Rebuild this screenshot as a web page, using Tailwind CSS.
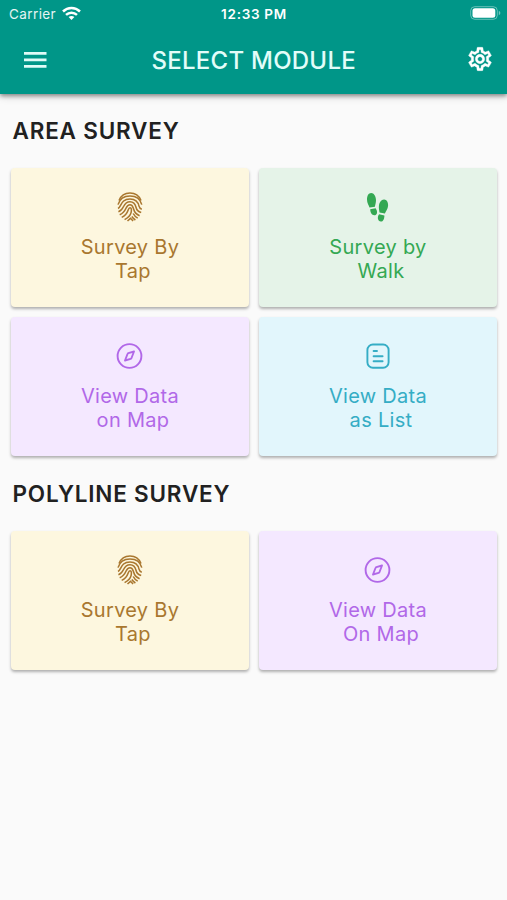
<!DOCTYPE html>
<html lang="en">
<head>
<meta charset="utf-8">
<title>Select Module</title>
<script src="https://cdn.jsdelivr.net/npm/@tailwindcss/browser@4"></script>
</head>
<body class="bg-[#fafafa] w-[507px] h-[900px] overflow-hidden font-['Inter','Liberation_Sans',sans-serif]">
<svg class="hidden">
  <symbol id="finger" viewBox="0 0 26 30">
    <g fill="none" stroke="currentColor" stroke-width="1.55" stroke-linecap="butt">
      <path d="M2 8.500C4 3.500 8 1 13 1s9 2.500 11 7.500"/>
      <path d="M1 12.600C2.500 7.300 7 3.900 13 3.900s10.500 3.400 11.800 8.700"/>
      <path d="M1 16.500C4.500 15 3.600 6.900 13 6.900c6.500 0 8.400 4.300 9 7.300 .4 1.800 1.300 2.600 2.800 3"/>
      <path d="M1.400 19.800C8 17.600 5.400 9.800 13 9.800c4.200 0 5.400 3 6 5.500 .6 2.700 2.400 4.500 5.200 5.300"/>
      <path d="M2.700 22.800C10.500 19.700 7.800 12.700 13 12.700c2.600 0 3 2.300 3.600 4.300 .8 3.200 3 5.500 6 6.700"/>
      <path d="M4.700 25.400C12.500 21.500 10.300 15.700 13 15.700c1.700 0 1.500 2.600 1.200 4.400-.6 3-3 5.600-6.600 7.500"/>
      <path d="M16.200 21.500c1 2 2.500 3.500 4.500 4.700M14.800 24.500c1 1.500 2 2.500 3.600 3.500M10.500 29l3-2.700 2.600 2.700"/>
    </g>
  </symbol>
  <symbol id="steps" viewBox="0 0 24 32">
    <g fill="currentColor">
      <path d="M5.100 1C8 1 10 4.500 10 8.200c0 2.700-.8 4.500-1.100 6.500l-5.400 .9C2.800 13 1 11.300 1 7.500 1 3.800 2.600 1 5.100 1Z"/>
      <path d="M4.200 17.200l5.400-1c1 1.500 1.700 3 1.400 4.700-.3 1.600-1.400 2.300-2.700 2.300-2.400 0-4.100-3-4.100-6Z"/>
      <path d="M18.200 7.400c-2.900-.2-5 3-5.300 6.500-.2 2.800 .4 4.600 .6 6.600l5.400 1.100c.9-2.400 3-4.100 3.200-8 .2-3.500-1.500-6.100-3.900-6.200Z"/>
      <path d="M18.400 23.400l-5.300-1.100c-1 1.400-1.400 2.800-1.200 4.200 .3 1.900 1.400 3 2.900 3.100 2.300 .1 3.600-2.900 3.600-6.200Z"/>
    </g>
  </symbol>
  <symbol id="compass" viewBox="0 0 28 28">
    <g fill="none" stroke="currentColor" stroke-width="1.900" stroke-linejoin="round">
      <circle cx="13.500" cy="14" r="11.900"/>
      <path d="M18 9.500l-5.600 1.600q-.7 .2-.9 .9L9 18.500l5.600-1.600q.7-.2 .9-.9Z"/>
    </g>
  </symbol>
  <symbol id="list" viewBox="0 0 26 28">
    <g fill="none" stroke="currentColor" stroke-width="1.900" stroke-linecap="round">
      <rect x="2.400" y="2.500" width="21.200" height="23.200" rx="5.500"/>
      <path d="M8.600 9h3.400M8.600 14.200h9M8.600 19.300h9"/>
    </g>
  </symbol>
</svg>

<header class="h-[94px] bg-[#009688] text-white shadow-[0_2px_4px_rgba(0,0,0,0.38),0_3px_8px_rgba(0,0,0,0.14)]">
  <div class="grid grid-cols-3 items-center h-[27px] pl-[7px] pr-[6px]">
    <div class="flex items-center gap-[6px] pl-[2px] text-[13.500px] tracking-[0.4px] text-white/90">
      <span class="pt-px">Carrier</span>
      <svg class="w-[19px] h-[15px] -mt-px" viewBox="0 0 19 15" fill="none" stroke="white" stroke-width="2.500"><path d="M1 5.500c4.800-4.600 12.200-4.600 17 0"/><path d="M4 8.900c3.200-3 7.800-3 11 0"/><path d="M6.600 11.100c1.700-1.500 4.100-1.500 5.800 0L9.500 14Z" fill="white" stroke="none"/></svg>
    </div>
    <div class="pt-px text-center text-[13.500px] font-semibold tracking-[0.700px] whitespace-nowrap">12:33 PM</div>
    <svg class="justify-self-end w-[31px] h-[14px] -mt-px" viewBox="0 0 31 14"><rect x=".7" y=".7" width="26.600" height="12.600" rx="4" fill="none" stroke="white" stroke-opacity=".4"/><rect x="2.500" y="2.300" width="22.800" height="9.400" rx="2.500" fill="white"/><path d="M28.800 4.800q1.600 .7 1.600 2.200t-1.600 2.200Z" fill="white" fill-opacity=".45"/></svg>
  </div>
  <div class="grid grid-cols-[1fr_auto_1fr] items-center h-[66px] pl-[23.500px] pr-[13px]">
    <svg class="w-[23px] h-[16px] -mt-px" viewBox="0 0 23 16" fill="#e0fbf7"><path d="M0 0h22.500v2.700H0zM0 6.500h22.500v2.700H0zM0 13h22.500v2.700H0z"/></svg>
    <h1 class="pt-px text-[24px] leading-[28px] font-medium tracking-[0.250px] text-[#e2fdf9] -ml-[10px]">SELECT MODULE</h1>
    <svg class="justify-self-end w-[28px] h-[28px] -mt-[2px]" viewBox="0 0 24 24" fill="white"><path d="M19.430 12.980c.04-.32.07-.64.07-.98 0-.34-.03-.66-.07-.98l2.110-1.650c.19-.15.24-.42.12-.64l-2-3.460c-.09-.16-.26-.25-.44-.25-.06 0-.12.01-.17.030l-2.490 1c-.52-.4-1.080-.73-1.690-.98l-.38-2.650C14.460 2.180 14.250 2 14 2h-4c-.25 0-.46.18-.49.42l-.38 2.650c-.61.25-1.170.59-1.690.98l-2.490-1c-.06-.02-.12-.03-.18-.03-.17 0-.34.09-.43.25l-2 3.460c-.13.22-.07.49.12.64l2.110 1.650c-.04.32-.07.65-.07.98 0 .33.03.66.07.98l-2.110 1.650c-.19.15-.24.42-.12.64l2 3.460c.09.16.26.25.44.25.06 0 .12-.01.17-.03l2.490-1c.52.4 1.080.73 1.690.98l.38 2.650c.03.24.24.42.49.42h4c.25 0 .46-.18.49-.42l.38-2.650c.61-.25 1.170-.59 1.690-.98l2.490 1c.06.02.12.03.18.03.17 0 .34-.09.43-.25l2-3.460c.12-.22.07-.49-.12-.64l-2.110-1.650zm-1.980-1.710c.04.31.05.52.05.73 0 .21-.02.43-.05.73l-.14 1.130.89.7 1.080.84-.7 1.210-1.270-.51-1.040-.42-.9.68c-.43.32-.84.56-1.250.73l-1.060.43-.16 1.130-.2 1.350h-1.400l-.19-1.350-.16-1.130-1.060-.43c-.43-.18-.83-.41-1.230-.71l-.91-.7-1.060.43-1.270.51-.7-1.210 1.080-.84.89-.7-.14-1.130c-.03-.31-.05-.54-.05-.74s.02-.43.05-.73l.14-1.130-.89-.7-1.080-.84.7-1.210 1.270.51 1.040.42.9-.68c.43-.32.84-.56 1.250-.73l1.060-.43.16-1.130.2-1.350h1.390l.19 1.350.16 1.130 1.060.43c.43.18.83.41 1.230.71l.91.7 1.060-.43 1.270-.51.7 1.210-1.070.85-.89.7.14 1.130zM12 8c-2.210 0-4 1.790-4 4s1.790 4 4 4 4-1.790 4-4-1.790-4-4-4zm0 6c-1.100 0-2-.9-2-2s.9-2 2-2 2 .9 2 2-.9 2-2 2z" stroke="white" stroke-width=".3"/></svg>
  </div>
</header>

<main class="pl-[11px] pr-[10px]">
  <h2 class="h-[74px] pt-[22px] pl-[1.500px] text-[22.500px] leading-[30px] font-semibold tracking-[0.800px] text-[#212121]">AREA SURVEY</h2>
  <section class="grid grid-cols-2 gap-[10px] text-center text-[20px] leading-[24px] tracking-[0.300px]">
    <div class="h-[139px] rounded-[4px] bg-[#fdf7df] text-[#a9772f] shadow-[0_2px_3px_rgba(0,0,0,0.3)] flex flex-col items-center pt-[24px]">
      <svg class="w-[26px] h-[30px]"><use href="#finger"/></svg>
      <p class="mt-[13px]">Survey By<br><span class="pl-[6px]">Tap</span></p>
    </div>
    <div class="h-[139px] rounded-[4px] bg-[#e5f3e8] text-[#34a853] shadow-[0_2px_3px_rgba(0,0,0,0.3)] flex flex-col items-center pt-[24px]">
      <svg class="w-[24px] h-[32px]"><use href="#steps"/></svg>
      <p class="mt-[11px]">Survey by<br><span class="pl-[6px]">Walk</span></p>
    </div>
    <div class="h-[139px] rounded-[4px] bg-[#f4e8ff] text-[#b168e8] shadow-[0_2px_3px_rgba(0,0,0,0.3)] flex flex-col items-center pt-[25px]">
      <svg class="w-[28px] h-[28px]"><use href="#compass"/></svg>
      <p class="mt-[14px]">View Data<br><span class="pl-[6px]">on Map</span></p>
    </div>
    <div class="h-[139px] rounded-[4px] bg-[#e2f6fc] text-[#35adc5] shadow-[0_2px_3px_rgba(0,0,0,0.3)] flex flex-col items-center pt-[25px]">
      <svg class="w-[26px] h-[28px]"><use href="#list"/></svg>
      <p class="mt-[14px]">View Data<br><span class="pl-[6px]">as List</span></p>
    </div>
  </section>
  <h2 class="h-[75px] pt-[23px] pl-[1.500px] text-[22.500px] leading-[30px] font-semibold tracking-[0.800px] text-[#212121]">POLYLINE SURVEY</h2>
  <section class="grid grid-cols-2 gap-[10px] text-center text-[20px] leading-[24px] tracking-[0.300px]">
    <div class="h-[139px] rounded-[4px] bg-[#fdf7df] text-[#a9772f] shadow-[0_2px_3px_rgba(0,0,0,0.3)] flex flex-col items-center pt-[24px]">
      <svg class="w-[26px] h-[30px]"><use href="#finger"/></svg>
      <p class="mt-[13px]">Survey By<br><span class="pl-[6px]">Tap</span></p>
    </div>
    <div class="h-[139px] rounded-[4px] bg-[#f4e8ff] text-[#b168e8] shadow-[0_2px_3px_rgba(0,0,0,0.3)] flex flex-col items-center pt-[25px]">
      <svg class="w-[28px] h-[28px]"><use href="#compass"/></svg>
      <p class="mt-[14px]">View Data<br><span class="pl-[6px]">On Map</span></p>
    </div>
  </section>
</main>
</body>
</html>
